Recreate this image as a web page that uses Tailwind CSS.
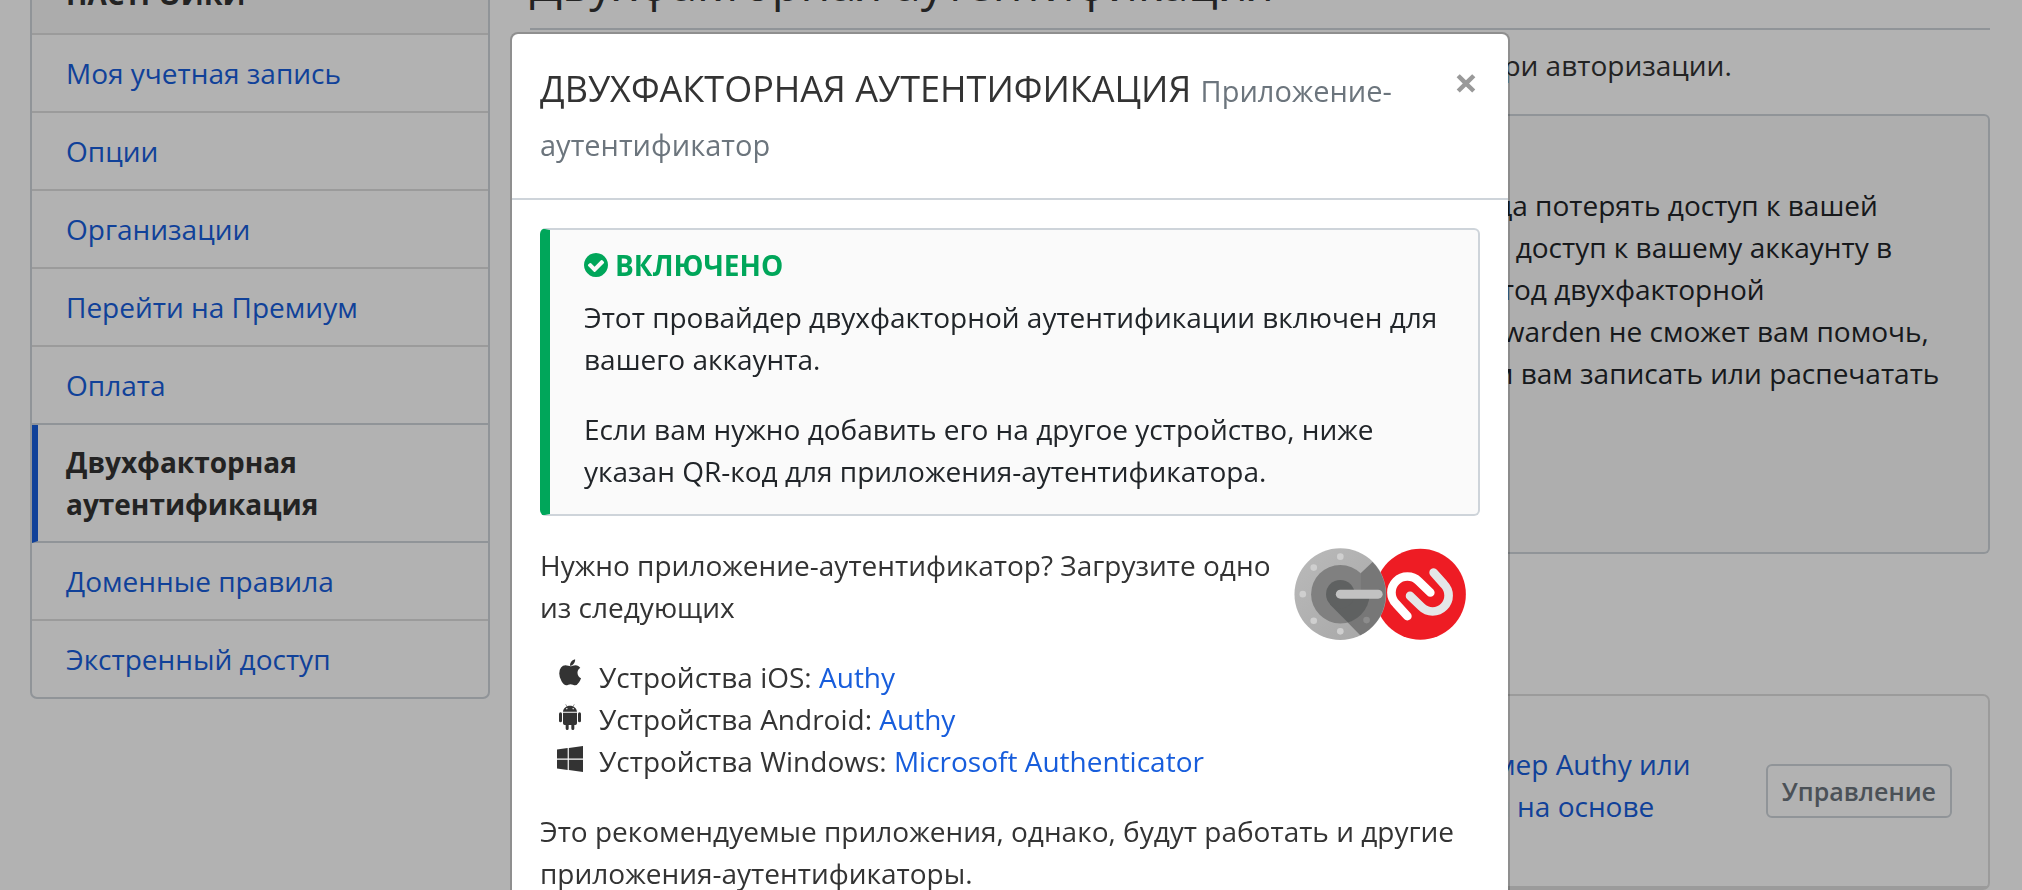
<!DOCTYPE html>
<html lang="ru">
<head>
<meta charset="utf-8">
<title>Двухфакторная аутентификация</title>
<script src="https://cdn.jsdelivr.net/npm/@tailwindcss/browser@4"></script>
</head>
<body class="h-screen overflow-hidden bg-white font-['Open_Sans','Noto_Sans',sans-serif] text-[28px] leading-[42px] text-[#333333]">

<div class="-mt-[47px] flex items-start gap-[40px] pl-[30px] pr-[32px]">
  <nav class="w-[460px] shrink-0 overflow-hidden rounded-[7px] border-2 border-[#ced4da]" aria-label="Настройки">
    <h2 class="border-b-2 border-[#dfdfdf] bg-[#f7f7f7] px-[34px] py-[18px] font-bold">НАСТРОЙКИ</h2>
    <a href="#" class="block border-b-2 border-[#dfdfdf] px-[34px] py-[17px] text-[#175ddc]">Моя учетная запись</a>
    <a href="#" class="block border-b-2 border-[#dfdfdf] px-[34px] py-[17px] text-[#175ddc]">Опции</a>
    <a href="#" class="block border-b-2 border-[#dfdfdf] px-[34px] py-[17px] text-[#175ddc]">Организации</a>
    <a href="#" class="block border-b-2 border-[#dfdfdf] px-[34px] py-[17px] text-[#175ddc]">Перейти на Премиум</a>
    <a href="#" class="block border-b-2 border-[#ced4da] px-[34px] py-[17px] text-[#175ddc]">Оплата</a>
    <a href="#" aria-current="page" class="block border-b-2 border-l-6 border-b-[#ced4da] border-l-[#175ddc] py-[16px] pl-[28px] pr-[34px] font-bold">Двухфакторная аутентификация</a>
    <a href="#" class="block border-b-2 border-[#dfdfdf] px-[34px] py-[17px] text-[#175ddc]">Доменные правила</a>
    <a href="#" class="block px-[34px] py-[17px] text-[#175ddc]">Экстренный доступ</a>
  </nav>

  <main class="min-w-0 flex-1">
    <h1 class="border-b-2 border-[#ced4da] pb-[15px] text-[47px] leading-[60px]">Двухфакторная аутентификация</h1>
    <p class="mt-[14px]">Обезопасьте ваш аккаунт, запрашивая второе подтверждение входа при авторизации.</p>
    <section class="mt-[28px] rounded-[6px] border-2 border-l-10 border-[#ced4da] border-l-[#bf7e16] bg-[#fafafa] px-[34px] pb-[22px] pt-[14px] text-[#212529]">
      <h3 class="mb-[12px] font-bold text-[#bf7e16]">ВНИМАНИЕ</h3>
      <p>Включив двухфакторную аутентификацию, вы можете раз и навсегда потерять доступ к вашей<br>
      учетной записи Bitwarden. Код восстановления позволяет получить доступ к вашему аккаунту в<br>
      случае, если вы больше не можете использовать свой обычный метод двухфакторной<br>
      аутентификации (например, при потере устройства). Поддержка Bitwarden не сможет вам помочь,<br>
      если вы утратите доступ к вашему аккаунту. Мы очень рекомендуем вам записать или распечатать<br>
      код восстановления.</p>
      <button type="button" class="mt-[40px] rounded-[6px] border-2 border-[#bf7e16] px-[14px] text-[25px] leading-[50px] text-[#bf7e16]">Показать код восстановления</button>
    </section>
    <h2 class="mb-[14px] mt-[56px] text-[40px] leading-[70px]">Провайдеры</h2>
    <ul class="rounded-[7px] border-2 border-[#dfdfdf]">
      <li class="flex items-center border-b-2 border-[#dfdfdf] px-[36px] py-[17px]">
        <svg class="mr-[67px] h-[92px] w-[172px] shrink-0" viewBox="0 0 517 277" aria-hidden="true"><use href="#logo"/></svg>
        <div class="min-w-0 flex-1 text-[#175ddc]">
          <h3 class="font-bold leading-[30px]">Приложение-аутентификатор</h3>
          <p>Используйте приложение-аутентификатор (например Authy или<br>
          Google Authenticator) для создания кодов проверки на основе<br>
          времени.</p>
        </div>
        <button type="button" class="rounded-[6px] border-2 border-[#ced4da] px-[14px] text-[25px] font-semibold leading-[50px] text-[#6c757d]">Управление</button>
      </li>
    </ul>
  </main>
</div>

<div class="fixed inset-0 overflow-hidden bg-black/30 pr-[2px] pt-[32px]">
  <div role="dialog" aria-modal="true" aria-labelledby="dialog-title" class="mx-auto w-[1000px] rounded-[8px] border-2 border-black/20 bg-white bg-clip-padding">
    <header class="flex items-start justify-between border-b-2 border-[#ced4da] p-[28px]">
      <h2 id="dialog-title" class="min-w-0 flex-1 text-[36px] leading-[54px]">ДВУХФАКТОРНАЯ АУТЕНТИФИКАЦИЯ <small class="text-[29px] leading-none text-[#6c757d]">Приложение-<br>аутентификатор</small></h2>
      <button type="button" aria-label="Закрыть" class="w-[28px] text-center text-[42px] font-bold leading-[40px] text-[#999999]">×</button>
    </header>
    <div class="p-[28px]">
      <section class="rounded-[6px] border-2 border-l-10 border-[#ced4da] border-l-[#00a65a] bg-[#fafafa] px-[34px] pb-[22px] pt-[14px] text-[#212529]">
        <h3 class="mb-[10px] flex items-center gap-[7px] font-bold text-[#00a65a]">
          <svg class="size-[24px]" viewBox="128 128 1536 1536" fill="currentColor" aria-hidden="true"><path d="M1412 734q0-28-18-46l-91-90q-19-19-45-19t-45 19l-408 407-226-226q-19-19-45-19t-45 19l-91 90q-18 18-18 46 0 27 18 45l362 362q19 19 45 19 27 0 46-19l543-543q18-18 18-45zm252 162q0 209-103 385.500t-279.500 279.500-385.500 103-385.500-103-279.500-279.500-103-385.500 103-385.500 279.500-279.500 385.500-103 385.500 103 279.500 279.500 103 385.500z"/></svg>
          ВКЛЮЧЕНО
        </h3>
        <p>Этот провайдер двухфакторной аутентификации включен для вашего аккаунта.</p>
        <p class="mt-[28px]">Если вам нужно добавить его на другое устройство, ниже указан QR-код для приложения-аутентификатора.</p>
      </section>
      <div class="mt-[28px] flex items-start justify-between gap-[20px] pr-[14px]">
        <p class="min-w-0 flex-1">Нужно приложение-аутентификатор? Загрузите одно из следующих</p>
        <svg class="-mb-[12px] mt-[4px] h-[92px] w-[172px] shrink-0" viewBox="0 0 517 277" role="img" aria-label="Google Authenticator, Authy">
          <defs>
            <linearGradient id="dial" x1="0" y1="0" x2="1" y2="1"><stop offset="0" stop-color="#bababa"/><stop offset="1" stop-color="#a6a6a6"/></linearGradient>
            <clipPath id="hub"><circle cx="139" cy="139" r="88"/></clipPath>
          </defs>
          <g id="logo">
            <circle cx="380" cy="139" r="137" fill="#ee1c24"/>
            <path d="M420 74L451 109A48 48 0 0 1 383 177L349 144" fill="none" stroke="#e4e7e8" stroke-width="26" stroke-linecap="round"/>
            <path d="M341 205L307 168A48 48 0 0 1 375 100L410 134" fill="none" stroke="#ffffff" stroke-width="26" stroke-linecap="round"/>
            <circle cx="139" cy="139" r="138" fill="url(#dial)"/>
            <circle cx="139" cy="139" r="88" fill="#808080"/>
            <path d="M201 75L236 42A138 138 0 0 1 199 263L106 168L139 139L201 139Z" fill="#777777"/>
            <g clip-path="url(#hub)">
              <path d="M108 170L139 139H230V230H168Z" fill="#5f6161"/>
            </g>
            <circle cx="139" cy="139" r="43" fill="#5f6161"/>
            <path d="M139 139H253" stroke="#c2c2c2" stroke-width="27" stroke-linecap="round"/>
            <g fill="#cfcfcf"><circle cx="139" cy="26" r="10"/><circle cx="59" cy="59" r="10"/><circle cx="26" cy="139" r="10"/><circle cx="59" cy="219" r="10"/><circle cx="139" cy="251" r="10"/></g>
            <circle cx="218" cy="217" r="10" fill="#8c8c8c"/>
          </g>
        </svg>
      </div>
      <ul class="mt-[28px]">
        <li class="flex"><span class="flex w-[59px] justify-center pt-[3px]"><svg class="size-[28px]" viewBox="64 0 1792 1792" fill="currentColor" aria-hidden="true"><path d="M1665 1235q-39 125-123 250-129 196-257 196-49 0-140-32-86-32-151-32-61 0-142 33-81 34-132 34-152 0-301-259-147-261-147-503 0-228 113-374 113-144 284-144 72 0 177 30 104 30 138 30 45 0 143-34 102-34 173-34 119 0 213 65 52 36 104 100-79 67-114 118-65 94-65 207 0 124 69 223t158 126zm-376-1173q0 61-29 136-30 75-93 138-54 54-108 72-37 11-104 17 3-149 78-257 74-107 250-148 1 3 2.500 11t2.500 11q0 4 .5 10t.5 10z"/></svg></span><span>Устройства iOS: <a href="#" class="text-[#175ddc]">Authy</a></span></li>
        <li class="flex"><span class="flex w-[59px] justify-center pt-[6px]"><svg class="h-[26px] w-[22px]" viewBox="0 0 66 78" fill="currentColor" aria-hidden="true"><path d="M20 1L25 9M46 1L41 9" stroke="currentColor" stroke-width="1.500"/><path fill-rule="evenodd" d="M12 23C13 12 22 5 33 5S53 12 54 23ZM23.500 12a2 2 0 1 0 .01 0ZM42.500 12a2 2 0 1 0 .01 0Z"/><path d="M12 26H54V58Q54 63 49 63H46V73.500A4.500 4.500 0 0 1 37 73.500V63H29V73.500A4.500 4.500 0 0 1 20 73.500V63H17Q12 63 12 58Z"/><rect y="25" width="9" height="30" rx="4.500"/><rect x="57" y="25" width="9" height="30" rx="4.500"/></svg></span><span>Устройства Android: <a href="#" class="text-[#175ddc]">Authy</a></span></li>
        <li class="flex"><span class="flex w-[59px] justify-center pt-[6px]"><svg class="size-[26px]" viewBox="0 128 1664 1664" fill="currentColor" aria-hidden="true"><path d="M682 1006v651l-682-94v-557h682zm0-743v659h-682v-565zm982 743v786l-907-125v-661h907zm0-878v794h-907v-669z"/></svg></span><span>Устройства Windows: <a href="#" class="text-[#175ddc]">Microsoft Authenticator</a></span></li>
      </ul>
      <p class="mt-[28px]">Это рекомендуемые приложения, однако, будут работать и другие приложения-аутентификаторы.</p>
    </div>
  </div>
</div>
</body>
</html>
